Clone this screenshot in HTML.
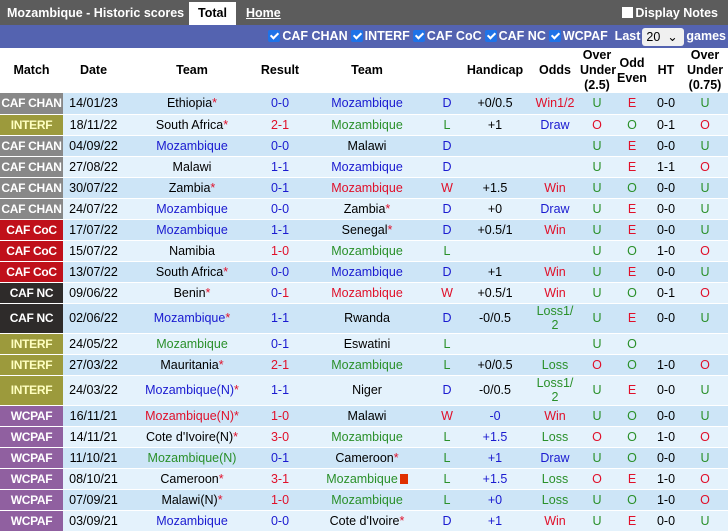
<!DOCTYPE html>
<html><head><meta charset="utf-8"><style>
*{margin:0;padding:0;box-sizing:border-box}
body{width:728px;height:531px;overflow:hidden;font-family:"Liberation Sans",Arial,sans-serif;font-size:12.5px;background:#fff}
.top{height:25px;background:#5c5c5c;position:relative;color:#fff;font-weight:bold;font-size:12.5px}
.top .t{position:absolute;left:7px;top:6px}
.top .tot{position:absolute;left:189px;top:2px;width:47px;height:23px;background:#fff;color:#000;text-align:center;line-height:22px}
.top .home{position:absolute;left:246px;top:6px;text-decoration:underline}
.top .dn{position:absolute;right:10px;top:6px}
.top .dn i{display:inline-block;width:11px;height:11px;background:#fff;vertical-align:-1px;margin-right:2px}
.flt{height:23px;background:#5463b0;color:#fff;font-weight:bold;font-size:12.5px;text-align:right;padding-right:2px;line-height:23px}
.cb{display:inline-block;width:12px;height:12px;background:#1e73e8;border-radius:2px;vertical-align:-2px;margin:0 2px 0 3px;position:relative}
.cb:after{content:"";position:absolute;left:4px;top:1px;width:3px;height:6px;border:solid #fff;border-width:0 2px 2px 0;transform:rotate(45deg)}
.sel{display:inline-block;width:42px;height:18px;background:#f0f0f0;color:#000;font-weight:normal;border-radius:3px;line-height:18px;text-align:left;padding-left:4px;vertical-align:middle;margin:0 2px}
table{border-collapse:collapse;width:728px;table-layout:fixed}
th{height:45px;font-size:12.5px;font-weight:bold;line-height:15px;background:#fff;white-space:nowrap}
td{text-align:center;height:21px;border-bottom:1px solid #fff;white-space:nowrap;padding:0;overflow:visible}
tr.a td{background:#cde5f7}
tr.b td{background:#e4f2fc}
tr.h td{height:30px;line-height:14px}
td.m{color:#fff;font-weight:bold;font-size:12px;letter-spacing:-0.3px}
.g{background:#888!important}.o{background:#9c9a3c!important;color:#ffffc0!important}.r{background:#c0101a!important}.k{background:#2e2b2a!important}.p{background:#9060a0!important}
.bl{color:#1a1ad0}.rd{color:#e0102a}.gr{color:#2a902a}
.s{color:#e0102a}
.ic{display:inline-block;width:8px;height:10px;background:#e03000;vertical-align:-1px;margin-left:2px}
</style></head><body>
<div class="top"><span class="t">Mozambique - Historic scores</span><span class="tot">Total</span><span class="home">Home</span><span class="dn"><i></i>Display Notes</span></div>
<div class="flt"><span class="cb"></span>CAF CHAN<span class="cb"></span>INTERF<span class="cb"></span>CAF CoC<span class="cb"></span>CAF NC<span class="cb"></span>WCPAF&nbsp;&nbsp;Last<span class="sel">20 &nbsp;⌄</span>games</div>
<table>
<colgroup><col style="width:63px"><col style="width:61px"><col style="width:136px"><col style="width:40px"><col style="width:134px"><col style="width:26px"><col style="width:70px"><col style="width:50px"><col style="width:34px"><col style="width:36px"><col style="width:32px"><col style="width:46px"></colgroup>
<tr><th>Match</th><th>Date</th><th>Team</th><th>Result</th><th>Team</th><th></th><th>Handicap</th><th>Odds</th><th>Over<br>Under<br>(2.5)</th><th>Odd<br>Even</th><th>HT</th><th>Over<br>Under<br>(0.75)</th></tr>
<tr class="a"><td class="m g">CAF CHAN</td><td>14/01/23</td><td>Ethiopia<span class="s">*</span></td><td class="bl">0-0</td><td class="bl">Mozambique</td><td class="bl">D</td><td>+0/0.5</td><td class="rd">Win1/2</td><td class="gr">U</td><td class="rd">E</td><td>0-0</td><td class="gr">U</td></tr>
<tr class="b"><td class="m o">INTERF</td><td>18/11/22</td><td>South Africa<span class="s">*</span></td><td class="rd">2-1</td><td class="gr">Mozambique</td><td class="gr">L</td><td>+1</td><td class="bl">Draw</td><td class="rd">O</td><td class="gr">O</td><td>0-1</td><td class="rd">O</td></tr>
<tr class="a"><td class="m g">CAF CHAN</td><td>04/09/22</td><td class="bl">Mozambique</td><td class="bl">0-0</td><td>Malawi</td><td class="bl">D</td><td></td><td></td><td class="gr">U</td><td class="rd">E</td><td>0-0</td><td class="gr">U</td></tr>
<tr class="b"><td class="m g">CAF CHAN</td><td>27/08/22</td><td>Malawi</td><td class="bl">1-1</td><td class="bl">Mozambique</td><td class="bl">D</td><td></td><td></td><td class="gr">U</td><td class="rd">E</td><td>1-1</td><td class="rd">O</td></tr>
<tr class="a"><td class="m g">CAF CHAN</td><td>30/07/22</td><td>Zambia<span class="s">*</span></td><td class="bl">0-1</td><td class="rd">Mozambique</td><td class="rd">W</td><td>+1.5</td><td class="rd">Win</td><td class="gr">U</td><td class="gr">O</td><td>0-0</td><td class="gr">U</td></tr>
<tr class="b"><td class="m g">CAF CHAN</td><td>24/07/22</td><td class="bl">Mozambique</td><td class="bl">0-0</td><td>Zambia<span class="s">*</span></td><td class="bl">D</td><td>+0</td><td class="bl">Draw</td><td class="gr">U</td><td class="rd">E</td><td>0-0</td><td class="gr">U</td></tr>
<tr class="a"><td class="m r">CAF CoC</td><td>17/07/22</td><td class="bl">Mozambique</td><td class="bl">1-1</td><td>Senegal<span class="s">*</span></td><td class="bl">D</td><td>+0.5/1</td><td class="rd">Win</td><td class="gr">U</td><td class="rd">E</td><td>0-0</td><td class="gr">U</td></tr>
<tr class="b"><td class="m r">CAF CoC</td><td>15/07/22</td><td>Namibia</td><td class="rd">1-0</td><td class="gr">Mozambique</td><td class="gr">L</td><td></td><td></td><td class="gr">U</td><td class="gr">O</td><td>1-0</td><td class="rd">O</td></tr>
<tr class="a"><td class="m r">CAF CoC</td><td>13/07/22</td><td>South Africa<span class="s">*</span></td><td class="bl">0-0</td><td class="bl">Mozambique</td><td class="bl">D</td><td>+1</td><td class="rd">Win</td><td class="gr">U</td><td class="rd">E</td><td>0-0</td><td class="gr">U</td></tr>
<tr class="b"><td class="m k">CAF NC</td><td>09/06/22</td><td>Benin<span class="s">*</span></td><td><span class="bl">0-</span><span class="rd">1</span></td><td class="rd">Mozambique</td><td class="rd">W</td><td>+0.5/1</td><td class="rd">Win</td><td class="gr">U</td><td class="gr">O</td><td>0-1</td><td class="rd">O</td></tr>
<tr class="a h"><td class="m k">CAF NC</td><td>02/06/22</td><td class="bl">Mozambique<span class="s">*</span></td><td class="bl">1-1</td><td>Rwanda</td><td class="bl">D</td><td>-0/0.5</td><td class="gr">Loss1/<br>2</td><td class="gr">U</td><td class="rd">E</td><td>0-0</td><td class="gr">U</td></tr>
<tr class="b"><td class="m o">INTERF</td><td>24/05/22</td><td class="gr">Mozambique</td><td class="bl">0-1</td><td>Eswatini</td><td class="gr">L</td><td></td><td></td><td class="gr">U</td><td class="gr">O</td><td></td><td></td></tr>
<tr class="a"><td class="m o">INTERF</td><td>27/03/22</td><td>Mauritania<span class="s">*</span></td><td class="rd">2-1</td><td class="gr">Mozambique</td><td class="gr">L</td><td>+0/0.5</td><td class="gr">Loss</td><td class="rd">O</td><td class="gr">O</td><td>1-0</td><td class="rd">O</td></tr>
<tr class="b h"><td class="m o">INTERF</td><td>24/03/22</td><td class="bl">Mozambique(N)<span class="s">*</span></td><td class="bl">1-1</td><td>Niger</td><td class="bl">D</td><td>-0/0.5</td><td class="gr">Loss1/<br>2</td><td class="gr">U</td><td class="rd">E</td><td>0-0</td><td class="gr">U</td></tr>
<tr class="a"><td class="m p">WCPAF</td><td>16/11/21</td><td class="rd">Mozambique(N)<span class="s">*</span></td><td class="rd">1-0</td><td>Malawi</td><td class="rd">W</td><td class="bl">-0</td><td class="rd">Win</td><td class="gr">U</td><td class="gr">O</td><td>0-0</td><td class="gr">U</td></tr>
<tr class="b"><td class="m p">WCPAF</td><td>14/11/21</td><td>Cote d'Ivoire(N)<span class="s">*</span></td><td class="rd">3-0</td><td class="gr">Mozambique</td><td class="gr">L</td><td class="bl">+1.5</td><td class="gr">Loss</td><td class="rd">O</td><td class="gr">O</td><td>1-0</td><td class="rd">O</td></tr>
<tr class="a"><td class="m p">WCPAF</td><td>11/10/21</td><td class="gr">Mozambique(N)</td><td class="bl">0-1</td><td>Cameroon<span class="s">*</span></td><td class="gr">L</td><td class="bl">+1</td><td class="bl">Draw</td><td class="gr">U</td><td class="gr">O</td><td>0-0</td><td class="gr">U</td></tr>
<tr class="b"><td class="m p">WCPAF</td><td>08/10/21</td><td>Cameroon<span class="s">*</span></td><td class="rd">3-1</td><td class="gr">Mozambique<span class="ic"></span></td><td class="gr">L</td><td class="bl">+1.5</td><td class="gr">Loss</td><td class="rd">O</td><td class="rd">E</td><td>1-0</td><td class="rd">O</td></tr>
<tr class="a"><td class="m p">WCPAF</td><td>07/09/21</td><td>Malawi(N)<span class="s">*</span></td><td class="rd">1-0</td><td class="gr">Mozambique</td><td class="gr">L</td><td class="bl">+0</td><td class="gr">Loss</td><td class="gr">U</td><td class="gr">O</td><td>1-0</td><td class="rd">O</td></tr>
<tr class="b"><td class="m p">WCPAF</td><td>03/09/21</td><td class="bl">Mozambique</td><td class="bl">0-0</td><td>Cote d'Ivoire<span class="s">*</span></td><td class="bl">D</td><td class="bl">+1</td><td class="rd">Win</td><td class="gr">U</td><td class="rd">E</td><td>0-0</td><td class="gr">U</td></tr>
</table>
</body></html>
